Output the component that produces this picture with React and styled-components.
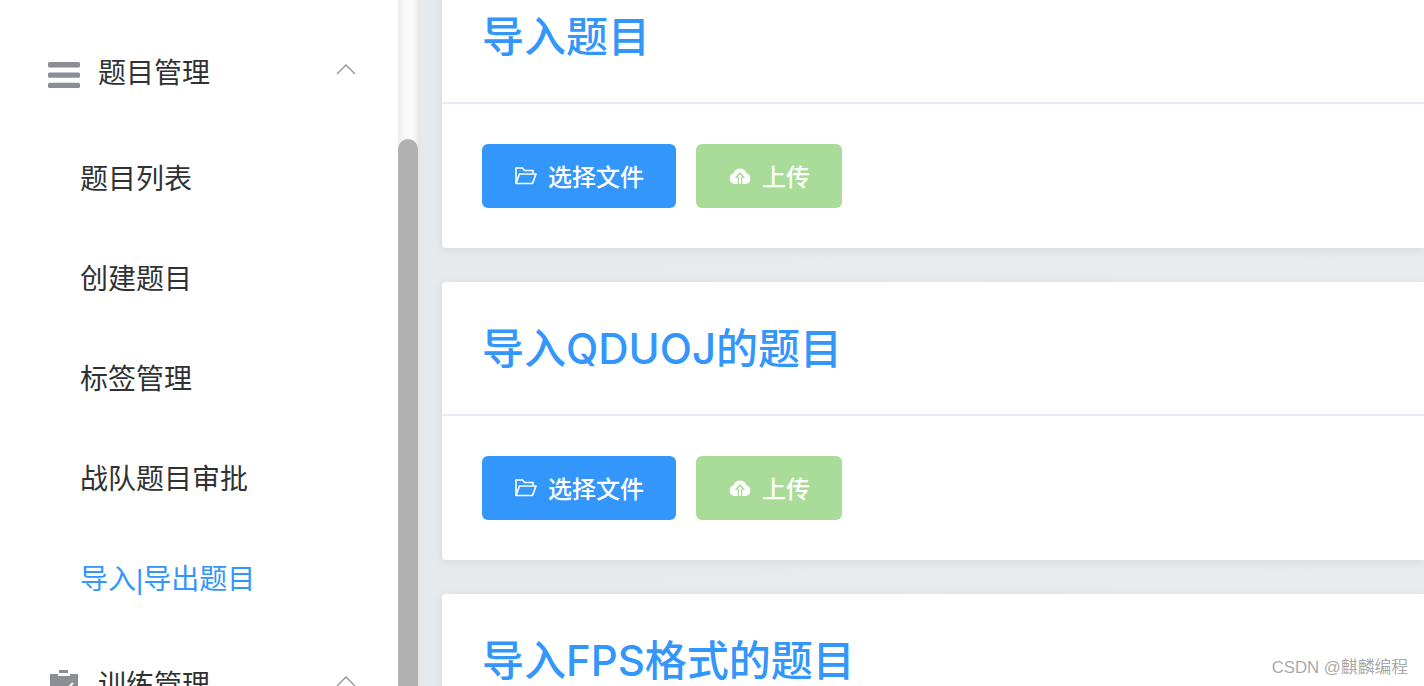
import React from 'react';
import styled, { createGlobalStyle } from 'styled-components';

const GlobalStyle = createGlobalStyle`
	html, body {
		margin: 0;
		height: 100%;
		overflow: hidden;
		background: #e8ecef;
		font-family: "Liberation Sans", "Noto Sans CJK SC", sans-serif;
	}
`;

const Page = styled.div`
	display: flex;
	width: 1424px;
	height: 686px;
	overflow: hidden;
	position: relative;
`;

const Sidebar = styled.nav`
	width: 398px;
	flex: none;
	padding-top: 16px;
	background: #fff;
	color: #303133;
	box-sizing: border-box;
`;

const GroupTitle = styled.div`
	display: flex;
	align-items: center;
	height: 112px;
	padding: 0 42px 0 48px;
	box-sizing: border-box;
	font-size: 28px;
`;

const GroupIcon = styled.svg`
	width: 32px;
	height: 32px;
	flex: none;
	margin-right: 18px;
	fill: #8c8e96;
`;

const GroupLabel = styled.span`
	flex: 1;
	padding-bottom: 2px;
`;

const Chevron = styled.svg`
	width: 20px;
	height: 12px;
	flex: none;
	margin-bottom: 4px;
	fill: none;
	stroke: #909399;
	stroke-width: 1.3;
`;

const MenuItem = styled.div`
	display: flex;
	align-items: center;
	height: 100px;
	padding-left: 80px;
	padding-bottom: 2px;
	box-sizing: border-box;
	font-size: 28px;
	color: ${(p) => (p.$active ? '#3296fa' : '#303133')};
`;

const ScrollTrack = styled.div`
	width: 20px;
	flex: none;
	background: linear-gradient(90deg, #ececec 0%, #fafafa 40%, #fafafa 70%, #ececec 100%);
	border-right: 2px solid #e6e6e6;
`;

const ScrollThumb = styled.div`
	width: 20px;
	height: 700px;
	margin-top: 139px;
	border-radius: 10px 10px 0 0;
	background: #b1b1b1;
`;

const Content = styled.main`
	flex: 1;
	min-width: 0;
	padding-left: 22px;
	background: linear-gradient(90deg, #e6eaed 0%, #e8ecef 100%);
`;

const CardList = styled.div`
	display: flex;
	flex-direction: column;
	gap: 34px;
	margin-top: -30px;
`;

const Card = styled.section`
	background: #fff;
	border-radius: 4px 0 0 4px;
	box-shadow: 0 2px 10px rgba(0, 0, 0, 0.08);
`;

const CardHeader = styled.header`
	display: flex;
	align-items: center;
	height: 134px;
	padding: 0 0 5px 40px;
	box-sizing: border-box;
	border-bottom: 2px solid #e8eaf4;
	font-family: Inter, "Noto Sans CJK SC", sans-serif;
	font-size: 42px;
	font-weight: 500;
	color: #3296fa;
`;

const CardBody = styled.div`
	display: flex;
	gap: 20px;
	padding: 40px;
`;

const Button = styled.button`
	display: flex;
	align-items: center;
	height: 64px;
	padding: 0 32px 2px 33px;
	box-sizing: border-box;
	border: 0;
	border-radius: 6px;
	font: inherit;
	font-size: 24px;
	font-weight: 500;
	color: #fff;
	background: ${(p) => (p.$disabled ? '#a9dc98' : '#3296fa')};
`;

const ButtonIcon = styled.svg`
	width: 22px;
	height: 22px;
	margin-right: 11px;
	flex: none;
`;

const Watermark = styled.div`
	position: absolute;
	right: 16px;
	top: 657px;
	font-size: 16.800px;
	line-height: 22px;
	color: rgba(140, 140, 140, 0.75);
	text-shadow: 0 0 2px rgba(255, 255, 255, 0.9);
`;

const BarsIcon = () => (
	<GroupIcon viewBox="0 0 32 32">
		<rect x="0" y="6" width="32" height="5.500" rx="1.500" />
		<rect x="0" y="16.400" width="32" height="5.400" rx="1.500" />
		<rect x="0" y="26.700" width="32" height="5.300" rx="1.500" />
	</GroupIcon>
);

const CaseIcon = () => (
	<GroupIcon viewBox="0 0 32 32">
		<rect x="11" y="2" width="9" height="3" />
		<path d="M2 6h8v2h12V6h8v26H2z" />
		<path d="M21 19l4-4" stroke="#fff" strokeWidth="2" />
	</GroupIcon>
);

const UpChevron = () => (
	<Chevron viewBox="0 0 20 12">
		<path d="M1 10l9-9 9 9" />
	</Chevron>
);

const FolderIcon = () => (
	<ButtonIcon viewBox="0 0 22 22" fill="none" stroke="#fff" strokeWidth="1.600">
		<path d="M1 19.500V4h6.500l2 2.500h8.500v3.500" />
		<path d="M1 19.500h16.500L21 10H4.500z" strokeLinejoin="round" />
	</ButtonIcon>
);

const CloudIcon = () => (
	<ButtonIcon viewBox="0 0 22 22" fill="#fff">
		<path
			fillRule="evenodd"
			d="M5.500 20A5.400 5.400 0 0 1 4.400 9.500 6.900 6.900 0 0 1 17.600 9.500 5.400 5.400 0 0 1 16.500 20zM11 8L5.800 13.700H8.700V20H13.300V13.700H16.200z"
		/>
		<path d="M11 10.500L8.800 12.900H10V20H12V12.900H13.200z" />
	</ButtonIcon>
);

const menuItems = ['题目列表', '创建题目', '标签管理', '战队题目审批', '导入|导出题目'];
const cardTitles = ['导入题目', '导入QDUOJ的题目', '导入FPS格式的题目'];

function App() {
	return (
		<Page>
			<GlobalStyle />
			<Sidebar>
				<GroupTitle>
					<BarsIcon />
					<GroupLabel>题目管理</GroupLabel>
					<UpChevron />
				</GroupTitle>
				{menuItems.map((item, i) => (
					<MenuItem key={item} $active={i === menuItems.length - 1}>
						{item}
					</MenuItem>
				))}
				<GroupTitle>
					<CaseIcon />
					<GroupLabel>训练管理</GroupLabel>
					<UpChevron />
				</GroupTitle>
			</Sidebar>
			<ScrollTrack>
				<ScrollThumb />
			</ScrollTrack>
			<Content>
				<CardList>
					{cardTitles.map((title) => (
						<Card key={title}>
							<CardHeader>{title}</CardHeader>
							<CardBody>
								<Button>
									<FolderIcon />
									选择文件
								</Button>
								<Button $disabled>
									<CloudIcon />
									上传
								</Button>
							</CardBody>
						</Card>
					))}
				</CardList>
			</Content>
			<Watermark>CSDN @麒麟编程</Watermark>
		</Page>
	);
}

export default App;
